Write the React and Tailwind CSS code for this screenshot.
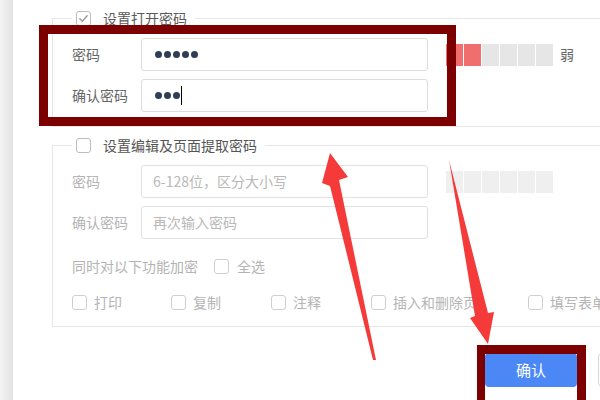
import React from "react";

const FONT = { fontFamily: '"Noto Sans CJK SC", "Noto Sans", sans-serif' };

function Box({ checked, muted }) {
  return (
    <span className={`w-[15px] h-[15px] rounded-[3px] border flex items-center justify-center bg-white ${muted ? "border-[#cfcfcf]" : "border-[#bdbdbd]"}`}>
      {checked && (
        <svg width="11" height="11" viewBox="0 0 12 12" fill="none">
          <path d="M2 6.2 L4.8 9 L10 3" stroke="#9a9a9a" strokeWidth="1.5" strokeLinecap="round" strokeLinejoin="round" />
        </svg>
      )}
    </span>
  );
}

function Dots({ n }) {
  return (
    <div className="flex gap-[2px]">
      {Array.from({ length: n }).map((_, i) => (
        <span key={i} className="w-[7px] h-[7px] rounded-full bg-[#2f3d57]" />
      ))}
    </div>
  );
}

function Strength({ filled, light }) {
  return (
    <div className="flex gap-[1px] ml-[18px]">
      {[0, 1, 2, 3, 4, 5].map(i => (
        <span key={i} className={`w-[17px] h-[22px] ${i < filled ? "bg-[#f06e6e]" : light ? "bg-[#efefef]" : "bg-[#e6e6e6]"}`} />
      ))}
    </div>
  );
}

export default function App() {
  const opts = [
    { t: "打印", w: "w-[99px]" },
    { t: "复制", w: "w-[100px]" },
    { t: "注释", w: "w-[100px]" },
    { t: "插入和删除页", w: "w-[157px]" },
    { t: "填写表单", w: "w-[120px]" },
  ];

  return (
    <div className="relative w-[600px] h-[400px] overflow-hidden bg-white flex text-[14px]" style={FONT}>
      {/* left edge of window */}
      <div className="w-[13px] shrink-0 bg-gradient-to-r from-[#f4f4f4] to-[#e3e3e3]" />

      <div className="flex flex-col pl-[39px] pt-[8px] w-[680px] shrink-0">
        {/* open password */}
        <fieldset className="border border-[#e6e6e6] pl-[19px] pt-[10px] pb-[14px]">
          <legend className="pl-[4px] pr-[8px]">
            <span className="flex items-center gap-[12px] h-[20px] text-[#5a5a5a]">
              <Box checked />
              设置打开密码
            </span>
          </legend>
          <div className="flex flex-col gap-[8px]">
            <div className="flex items-center">
              <span className="w-[69px] text-[#666]">密码</span>
              <div className="w-[287px] h-[33px] border border-[#dcdcdc] rounded-[3px] flex items-center pl-[13px]">
                <Dots n={5} />
              </div>
              <Strength filled={2} />
              <span className="ml-[7px] text-[#666]">弱</span>
            </div>
            <div className="flex items-center">
              <span className="w-[69px] text-[#666]">确认密码</span>
              <div className="w-[287px] h-[33px] border border-[#dcdcdc] rounded-[3px] flex items-center pl-[13px]">
                <Dots n={3} />
                <span className="w-[1px] h-[19px] bg-black ml-[1px]" />
              </div>
            </div>
          </div>
        </fieldset>

        {/* edit password */}
        <fieldset className="mt-[8px] border border-[#e6e6e6] pl-[19px] pt-[10px] pb-[14px]">
          <legend className="pl-[4px] pr-[8px]">
            <span className="flex items-center gap-[12px] h-[20px] text-[#555]">
              <Box />
              设置编辑及页面提取密码
            </span>
          </legend>
          <div className="flex flex-col gap-[8px]">
            <div className="flex items-center">
              <span className="w-[69px] text-[#b4b4b4]">密码</span>
              <div className="w-[287px] h-[33px] border border-[#e2e2e2] rounded-[3px] flex items-center pl-[11px] text-[#b8b8b8]">
                6-128位，区分大小写
              </div>
              <Strength filled={0} light />
            </div>
            <div className="flex items-center">
              <span className="w-[69px] text-[#b4b4b4]">确认密码</span>
              <div className="w-[287px] h-[33px] border border-[#e2e2e2] rounded-[3px] flex items-center pl-[11px] text-[#b8b8b8]">
                再次输入密码
              </div>
            </div>
          </div>
          <div className="flex items-center h-[20px] mt-[17px] text-[#b4b4b4]">
            <span className="w-[142px]">同时对以下功能加密</span>
            <Box muted />
            <span className="ml-[8px]">全选</span>
          </div>
          <div className="flex items-center h-[20px] mt-[16px] text-[#b4b4b4]">
            {opts.map(o => (
              <div key={o.t} className={`flex items-center gap-[7px] shrink-0 ${o.w}`}>
                <Box muted />
                <span>{o.t}</span>
              </div>
            ))}
          </div>
        </fieldset>

        {/* buttons */}
        <div className="flex gap-[21px] mt-[26px] pl-[433px]">
          <button className="w-[92px] h-[34px] rounded-[4px] bg-[#4b87f5] text-white text-[15px]">确认</button>
          <button className="w-[92px] h-[34px] rounded-[4px] border border-[#d6d6d6] bg-white text-[#555] text-[15px]">取消</button>
        </div>
      </div>

      {/* annotations */}
      <div className="absolute left-[39px] top-[25px] w-[417px] h-[101px] border-[9px] border-[#7d0000]" />
      <div className="absolute left-[477px] top-[345px] w-[109px] h-[70px] border-[9px] border-l-[8px] border-[#7d0000]" />
      <svg className="absolute left-0 top-0" width="600" height="400" viewBox="0 0 600 400">
        <polygon points="330,153 348,177 339,180 376,360 373,360 330,186 322,183" fill="#f53a3a" />
        <polygon points="449,160 488,313 494,312 488,344 470,318 475,316" fill="#f53a3a" />
      </svg>
    </div>
  );
}
